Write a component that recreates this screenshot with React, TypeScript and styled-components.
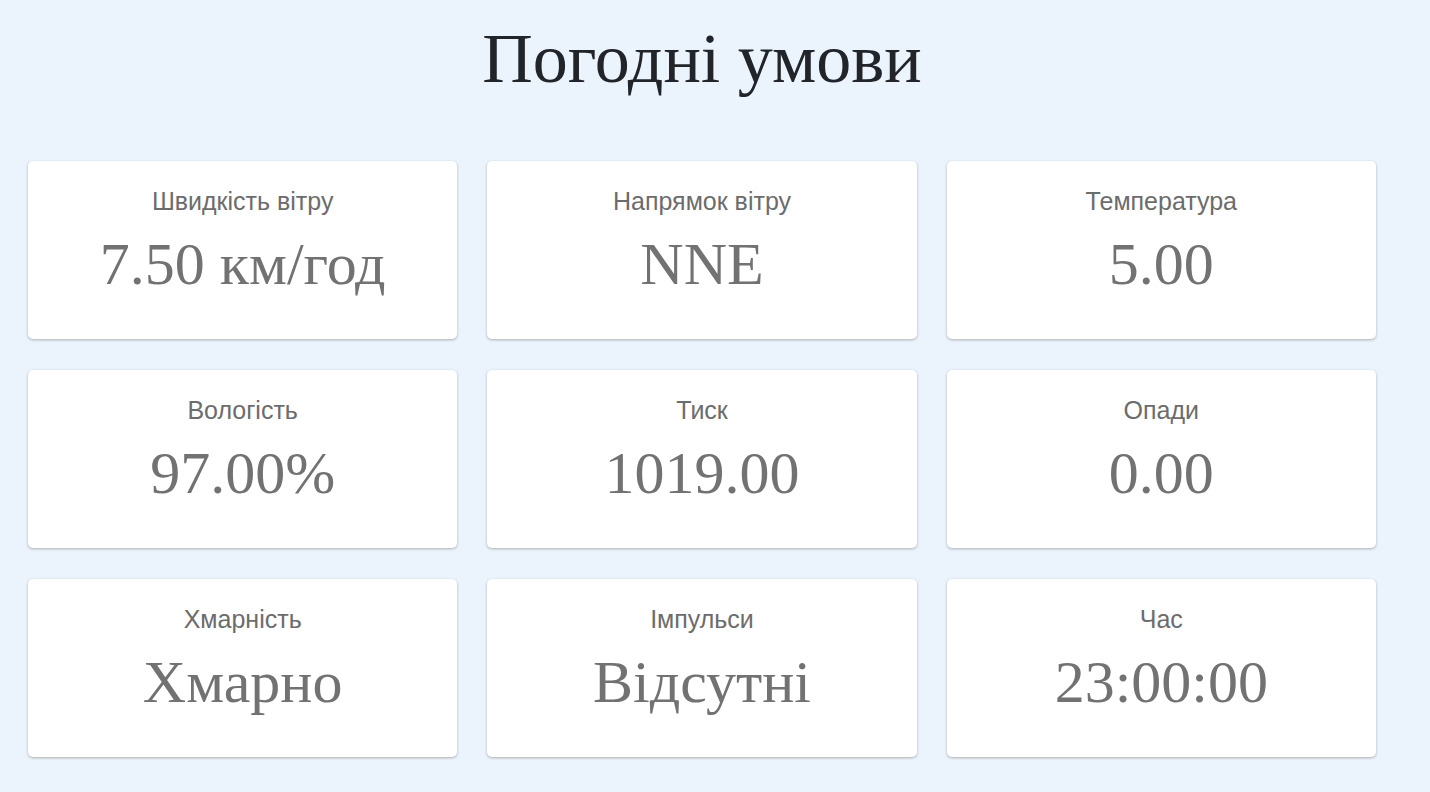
import React from "react";
import styled, { createGlobalStyle } from "styled-components";

const GlobalStyle = createGlobalStyle`
  html, body {
    margin: 0;
    padding: 0;
    background-color: #ebf3fc;
  }
  body {
    font-family: "Liberation Serif", "Times New Roman", serif;
  }
`;

const Page = styled.main`
  width: 1348px;
  margin-left: 28px;
  padding: 16px 0 30px;
`;

const Title = styled.h1`
  margin: 0 0 59px;
  text-align: center;
  font-family: "Liberation Serif", "Times New Roman", serif;
  font-weight: 400;
  font-size: 70px;
  line-height: 86px;
  color: #212529;
`;

const Grid = styled.section`
  display: grid;
  grid-template-columns: repeat(3, 1fr);
  column-gap: 30px;
  row-gap: 31px;
`;

const Card = styled.div`
  height: 178px;
  box-sizing: border-box;
  padding-top: 25px;
  display: flex;
  flex-direction: column;
  align-items: center;
  background: #ffffff;
  border-radius: 5px;
  box-shadow: 0 1px 3px rgba(0, 0, 0, 0.28);
`;

const Label = styled.div`
  font-family: "Liberation Sans", Arial, sans-serif;
  font-size: 25px;
  line-height: 30px;
  color: #6c6c6c;
`;

const Value = styled.div`
  margin-top: 14px;
  font-family: "Liberation Serif", "Times New Roman", serif;
  font-size: 60px;
  line-height: 68px;
  color: #727272;
`;

const items: { label: string; value: string }[] = [
  { label: "Швидкість вітру", value: "7.50 км/год" },
  { label: "Напрямок вітру", value: "NNE" },
  { label: "Температура", value: "5.00" },
  { label: "Вологість", value: "97.00%" },
  { label: "Тиск", value: "1019.00" },
  { label: "Опади", value: "0.00" },
  { label: "Хмарність", value: "Хмарно" },
  { label: "Імпульси", value: "Відсутні" },
  { label: "Час", value: "23:00:00" },
];

export default function App() {
  return (
    <>
      <GlobalStyle />
      <Page>
        <Title>Погодні умови</Title>
        <Grid>
          {items.map((item) => (
            <Card key={item.label}>
              <Label>{item.label}</Label>
              <Value>{item.value}</Value>
            </Card>
          ))}
        </Grid>
      </Page>
    </>
  );
}
